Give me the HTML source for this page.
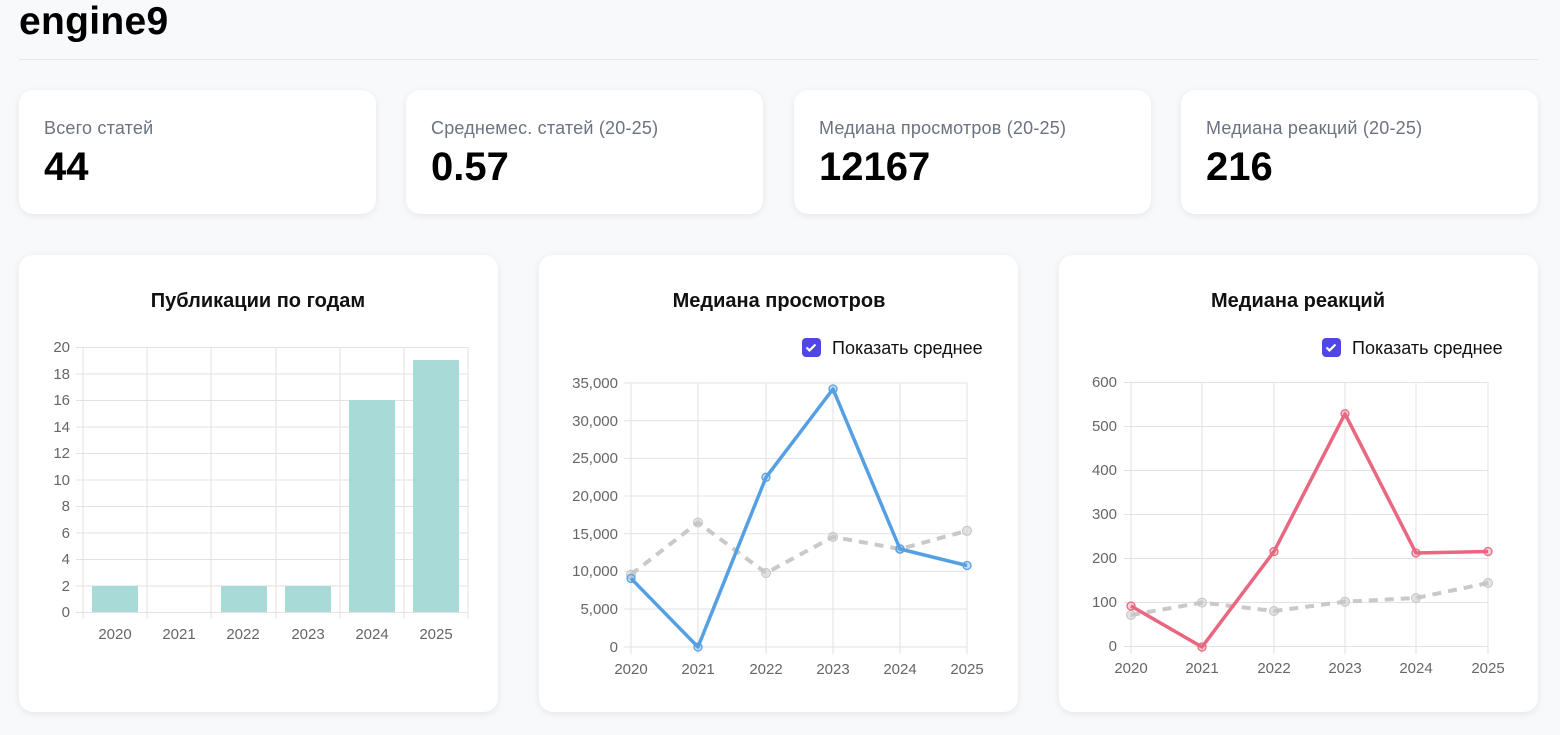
<!DOCTYPE html>
<html><head><meta charset="utf-8"><style>
body{margin:0;width:1560px;height:735px;background:#f8f9fb;font-family:"Liberation Sans","DejaVu Sans",sans-serif;position:relative;overflow:hidden}
h1{position:absolute;left:19px;top:0;margin:0;font-size:39px;line-height:44px;font-weight:bold;color:#000;letter-spacing:0.3px}
.hr{position:absolute;left:19px;top:59px;width:1519px;height:1px;background:#e3e5e8}
.card{position:absolute;background:#fff;border-radius:14px;box-shadow:0 2px 8px rgba(0,0,0,.08)}
.lab{position:absolute;left:25px;top:28px;font-size:18px;color:#6b7280;letter-spacing:0.2px}
.val{position:absolute;left:25px;top:55px;font-size:40px;font-weight:bold;color:#000}
svg{position:absolute;left:0;top:0}
</style></head><body>
<h1>engine9</h1><div class="hr"></div>
<div class="card" style="left:19px;top:90px;width:357px;height:124px"><div class="lab">Всего статей</div><div class="val">44</div></div>
<div class="card" style="left:406px;top:90px;width:357px;height:124px"><div class="lab">Среднемес. статей (20-25)</div><div class="val">0.57</div></div>
<div class="card" style="left:794px;top:90px;width:357px;height:124px"><div class="lab">Медиана просмотров (20-25)</div><div class="val">12167</div></div>
<div class="card" style="left:1181px;top:90px;width:357px;height:124px"><div class="lab">Медиана реакций (20-25)</div><div class="val">216</div></div>
<div class="card" style="left:19px;top:255px;width:479px;height:457px"></div>
<div class="card" style="left:539px;top:255px;width:479px;height:457px"></div>
<div class="card" style="left:1059px;top:255px;width:479px;height:457px"></div>
<svg width="1560" height="735" font-family="Liberation Sans, sans-serif">
<g font-size="20" font-weight="bold" text-anchor="middle" fill="#111">
<text x="258" y="307">Публикации по годам</text>
<text x="779" y="307">Медиана просмотров</text>
<text x="1298" y="307">Медиана реакций</text>
</g>
<!-- chart 1 -->
<g stroke="#e2e2e2" stroke-width="1">
<line x1="76" y1="347.5" x2="468" y2="347.5"/><line x1="76" y1="374" x2="468" y2="374"/><line x1="76" y1="400.5" x2="468" y2="400.5"/><line x1="76" y1="427" x2="468" y2="427"/><line x1="76" y1="453.5" x2="468" y2="453.5"/><line x1="76" y1="480" x2="468" y2="480"/><line x1="76" y1="506.5" x2="468" y2="506.5"/><line x1="76" y1="533" x2="468" y2="533"/><line x1="76" y1="559.5" x2="468" y2="559.5"/><line x1="76" y1="586" x2="468" y2="586"/><line x1="76" y1="612.5" x2="468" y2="612.5"/>
<line x1="83" y1="347" x2="83" y2="619"/><line x1="147" y1="347" x2="147" y2="619"/><line x1="211" y1="347" x2="211" y2="619"/><line x1="276" y1="347" x2="276" y2="619"/><line x1="340" y1="347" x2="340" y2="619"/><line x1="404" y1="347" x2="404" y2="619"/><line x1="468" y1="347" x2="468" y2="619"/>
</g>
<g fill="#a8dbd8">
<rect x="92" y="586" width="46" height="26"/><rect x="221" y="586" width="46" height="26"/><rect x="285" y="586" width="46" height="26"/><rect x="349" y="400" width="46" height="212"/><rect x="413" y="360" width="46" height="252"/>
</g>
<g font-size="15" fill="#666" text-anchor="end">
<text x="70" y="352">20</text><text x="70" y="379">18</text><text x="70" y="405">16</text><text x="70" y="432">14</text><text x="70" y="458">12</text><text x="70" y="485">10</text><text x="70" y="511">8</text><text x="70" y="538">6</text><text x="70" y="564">4</text><text x="70" y="591">2</text><text x="70" y="617">0</text>
</g>
<g font-size="15" fill="#666" text-anchor="middle">
<text x="115" y="639">2020</text><text x="179" y="639">2021</text><text x="243" y="639">2022</text><text x="308" y="639">2023</text><text x="372" y="639">2024</text><text x="436" y="639">2025</text>
</g>
<!-- chart 2 -->
<rect x="802" y="338" width="19" height="19" rx="4" fill="#4f46e5"/><path d="M806.5 347.5l3 3 6-6" stroke="#fff" stroke-width="2.2" fill="none"/>
<text x="832" y="354" font-size="18" fill="#111">Показать среднее</text>
<g stroke="#e2e2e2">
<line x1="624" y1="383" x2="967" y2="383"/><line x1="624" y1="420.7" x2="967" y2="420.7"/><line x1="624" y1="458.4" x2="967" y2="458.4"/><line x1="624" y1="496" x2="967" y2="496"/><line x1="624" y1="533.7" x2="967" y2="533.7"/><line x1="624" y1="571.4" x2="967" y2="571.4"/><line x1="624" y1="609" x2="967" y2="609"/><line x1="624" y1="647" x2="967" y2="647"/>
<line x1="631" y1="383" x2="631" y2="654"/><line x1="698" y1="383" x2="698" y2="654"/><line x1="766" y1="383" x2="766" y2="654"/><line x1="833" y1="383" x2="833" y2="654"/><line x1="900" y1="383" x2="900" y2="654"/><line x1="967" y1="383" x2="967" y2="654"/>
</g>
<g font-size="15" fill="#666" text-anchor="end">
<text x="618" y="388">35,000</text><text x="618" y="426">30,000</text><text x="618" y="463">25,000</text><text x="618" y="501">20,000</text><text x="618" y="539">15,000</text><text x="618" y="576">10,000</text><text x="618" y="614">5,000</text><text x="618" y="652">0</text>
</g>
<g font-size="15" fill="#666" text-anchor="middle">
<text x="631" y="674">2020</text><text x="698" y="674">2021</text><text x="766" y="674">2022</text><text x="833" y="674">2023</text><text x="900" y="674">2024</text><text x="967" y="674">2025</text>
</g>
<polyline points="631,574.6 698,522.5 766,573 833,536.9 900,549 967,530.8" fill="none" stroke="#c9c9c9" stroke-width="4" stroke-dasharray="9,7"/>
<g fill="rgba(200,200,200,.5)" stroke="#c4c4c4"><circle cx="631" cy="574.6" r="4.5"/><circle cx="698" cy="522.5" r="4.5"/><circle cx="766" cy="573" r="4.5"/><circle cx="833" cy="536.9" r="4.5"/><circle cx="900" cy="549" r="4.5"/><circle cx="967" cy="530.8" r="4.5"/></g>
<polyline points="631,578.4 698,647 766,477.3 833,389 900,549 967,565.5" fill="none" stroke="#55a0e3" stroke-width="3.5" stroke-linejoin="round"/>
<g fill="rgba(85,160,227,.3)" stroke="#55a0e3" stroke-width="1.3"><circle cx="631" cy="578.4" r="4"/><circle cx="698" cy="647" r="4"/><circle cx="766" cy="477.3" r="4"/><circle cx="833" cy="389" r="4"/><circle cx="900" cy="549" r="4"/><circle cx="967" cy="565.5" r="4"/></g>
<!-- chart 3 -->
<rect x="1322" y="338" width="19" height="19" rx="4" fill="#4f46e5"/><path d="M1326.5 347.5l3 3 6-6" stroke="#fff" stroke-width="2.2" fill="none"/>
<text x="1352" y="354" font-size="18" fill="#111">Показать среднее</text>
<g stroke="#e2e2e2">
<line x1="1124" y1="382.5" x2="1488" y2="382.5"/><line x1="1124" y1="426.5" x2="1488" y2="426.5"/><line x1="1124" y1="470.5" x2="1488" y2="470.5"/><line x1="1124" y1="514.5" x2="1488" y2="514.5"/><line x1="1124" y1="558.5" x2="1488" y2="558.5"/><line x1="1124" y1="602.5" x2="1488" y2="602.5"/><line x1="1124" y1="646.5" x2="1488" y2="646.5"/>
<line x1="1131" y1="382" x2="1131" y2="654"/><line x1="1202" y1="382" x2="1202" y2="654"/><line x1="1274" y1="382" x2="1274" y2="654"/><line x1="1345" y1="382" x2="1345" y2="654"/><line x1="1416" y1="382" x2="1416" y2="654"/><line x1="1488" y1="382" x2="1488" y2="654"/>
</g>
<g font-size="15" fill="#666" text-anchor="end">
<text x="1117" y="387">600</text><text x="1117" y="431">500</text><text x="1117" y="475">400</text><text x="1117" y="519">300</text><text x="1117" y="563">200</text><text x="1117" y="607">100</text><text x="1117" y="651">0</text>
</g>
<g font-size="15" fill="#666" text-anchor="middle">
<text x="1131" y="673">2020</text><text x="1202" y="673">2021</text><text x="1274" y="673">2022</text><text x="1345" y="673">2023</text><text x="1416" y="673">2024</text><text x="1488" y="673">2025</text>
</g>
<polyline points="1131,615 1202,602.6 1274,611 1345,601.7 1416,598 1488,583" fill="none" stroke="#c9c9c9" stroke-width="4" stroke-dasharray="9,7"/>
<g fill="rgba(200,200,200,.5)" stroke="#c4c4c4"><circle cx="1131" cy="615" r="4.5"/><circle cx="1202" cy="602.6" r="4.5"/><circle cx="1274" cy="611" r="4.5"/><circle cx="1345" cy="601.7" r="4.5"/><circle cx="1416" cy="598" r="4.5"/><circle cx="1488" cy="583" r="4.5"/></g>
<polyline points="1131,606 1202,647 1274,551.5 1345,413.8 1416,553 1488,551.5" fill="none" stroke="#e9677f" stroke-width="3.5" stroke-linejoin="round"/>
<g fill="rgba(233,103,127,.3)" stroke="#e9677f" stroke-width="1.3"><circle cx="1131" cy="606" r="4"/><circle cx="1202" cy="647" r="4"/><circle cx="1274" cy="551.5" r="4"/><circle cx="1345" cy="413.8" r="4"/><circle cx="1416" cy="553" r="4"/><circle cx="1488" cy="551.5" r="4"/></g>
</svg>
</body></html>
